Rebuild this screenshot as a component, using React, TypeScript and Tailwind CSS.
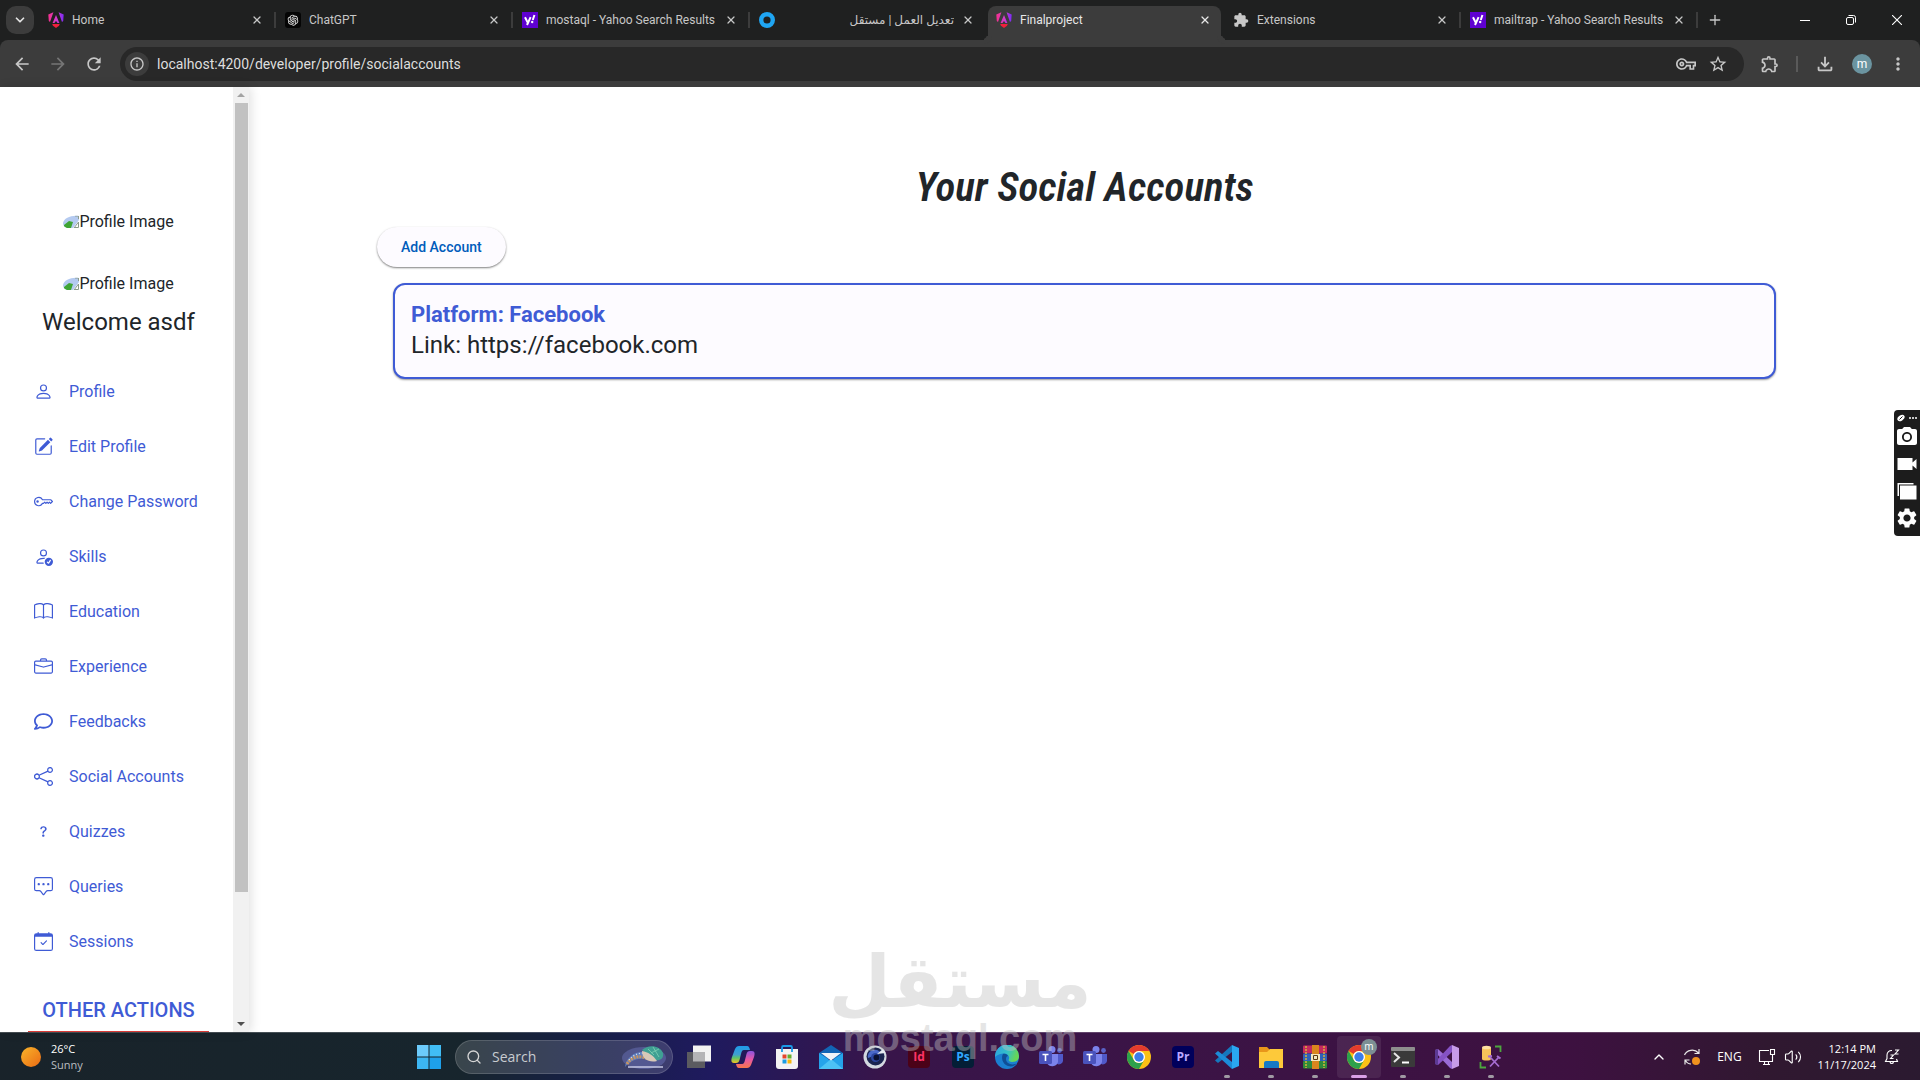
import type { ReactNode } from "react";
import { AiOutlineOpenAI } from "react-icons/ai";
import {
  BsBook,
  BsBriefcase,
  BsCalendarCheck,
  BsChatSquareDots,
  BsKey,
  BsPencilSquare,
  BsPerson,
  BsPersonCheck,
  BsQuestion,
  BsShare,
} from "react-icons/bs";
import { FaRegComment } from "react-icons/fa";
import {
  MdArrowBack,
  MdArrowForward,
  MdExtension,
  MdInfoOutline,
  MdMoreVert,
  MdOutlineExtension,
  MdOutlineFileDownload,
  MdOutlineVpnKey,
  MdPhotoCamera,
  MdRefresh,
  MdSettings,
  MdStarOutline,
  MdVideocam,
} from "react-icons/md";
import { ChevronDown, ChevronUp, Plus, Search, Volume2, X } from "lucide-react";

/* ---------- favicons ---------- */

function AngularIcon() {
  return (
    <svg viewBox="0 0 16 16" className="size-4 shrink-0">
      <defs>
        <linearGradient id="ng" x1="0" y1="0" x2="1" y2="0">
          <stop offset="0" stopColor="#f5308c" />
          <stop offset="0.55" stopColor="#d03bd0" />
          <stop offset="1" stopColor="#7a2bf5" />
        </linearGradient>
      </defs>
      <path
        d="M0.3 2.4L5.4 0.2L2 10L0.8 9ZM15.7 2.4L10.6 0.2L14 10L15.2 9ZM8 3L4.6 11H6.6L7.2 9.4H8.8L9.4 11H11.4Z"
        fill="url(#ng)"
      />
      <path d="M4.2 12h7.6L11 13.8L8 16L5 13.8Z" fill="#f0203c" />
    </svg>
  );
}

function ChatGptIcon() {
  return (
    <span className="flex size-4 shrink-0 items-center justify-center rounded-[3px] bg-[#050505] text-[#e6e6e6]">
      <AiOutlineOpenAI className="size-3.5" />
    </span>
  );
}

function YahooIcon() {
  return (
    <svg viewBox="0 0 16 16" className="size-4 shrink-0">
      <rect width="16" height="16" fill="#5f01d1" />
      <path d="M3 5.2L5.6 10.4M8.6 5.2L5 13" stroke="#fff" strokeWidth="2" />
      <path d="M12.4 3L10.8 8" stroke="#fff" strokeWidth="2" />
      <circle cx="10.2" cy="10" r="1.2" fill="#fff" />
    </svg>
  );
}

function RingIcon() {
  return (
    <svg viewBox="0 0 16 16" className="size-4 shrink-0">
      <circle cx="8" cy="8" r="5.8" fill="none" stroke="#1fa5f2" strokeWidth="4.4" />
    </svg>
  );
}

/* ---------- browser ---------- */

type Tab = { title: string; icon: ReactNode; active?: boolean; rtl?: boolean; line?: boolean };

const tabs: Tab[] = [
  { title: "Home", icon: <AngularIcon />, line: true },
  { title: "ChatGPT", icon: <ChatGptIcon />, line: true },
  { title: "mostaql - Yahoo Search Results", icon: <YahooIcon />, line: true },
  { title: "تعديل العمل | مستقل", icon: <RingIcon />, rtl: true },
  { title: "Finalproject", icon: <AngularIcon />, active: true },
  { title: "Extensions", icon: <MdExtension className="size-4 shrink-0 text-[#c7c7c7]" />, line: true },
  { title: "mailtrap - Yahoo Search Results", icon: <YahooIcon />, line: true },
];

function BrowserTab({ tab }: { tab: Tab }) {
  return (
    <div className="flex min-w-0 max-w-[237px] flex-1 items-center">
      <div
        className={
          tab.active
            ? "relative flex h-[34px] min-w-0 flex-1 items-center gap-2 self-end rounded-t-lg bg-[#3c3c3c] pr-2.5 pb-1.5 pl-2 text-[#e8e8e8] before:absolute before:bottom-0 before:-left-2 before:size-2 before:rounded-br-lg before:shadow-[4px_4px_0_0_#3c3c3c] after:absolute after:-right-2 after:bottom-0 after:size-2 after:rounded-bl-lg after:shadow-[-4px_4px_0_0_#3c3c3c]"
            : "flex min-w-0 flex-1 items-center gap-2 pr-2.5 pl-2 text-[#c7c7c7]"
        }
      >
        {tab.icon}
        <span dir={tab.rtl ? "rtl" : "ltr"} className="flex-1 overflow-hidden text-xs whitespace-nowrap">
          {tab.title}
        </span>
        <button type="button" aria-label={`Close ${tab.title}`} className="flex w-3 items-center justify-center">
          <X className="size-3" strokeWidth={2.5} />
        </button>
      </div>
      <span className={tab.line ? "mx-px h-4 w-0.5 bg-[#3c3c3c]" : "mx-px h-4 w-0.5"} />
    </div>
  );
}

function TabStrip() {
  return (
    <div className="flex h-10 items-stretch bg-[#1f2020]">
      <div className="flex flex-1 items-stretch">
        <button
          type="button"
          aria-label="Search tabs"
          className="mx-1.5 flex size-7 items-center justify-center self-center rounded-[10px] bg-[#3c3c3c] text-[#e3e3e3]"
        >
          <ChevronDown className="size-3.5" strokeWidth={3} />
        </button>
        {tabs.map((tab) => (
          <BrowserTab key={tab.title} tab={tab} />
        ))}
        <button type="button" aria-label="New tab" className="ml-2 text-[#c7c7c7]">
          <Plus className="size-4" />
        </button>
      </div>
      <div className="flex text-white">
        <button type="button" aria-label="Minimize" className="flex w-[46px] items-center justify-center">
          <svg viewBox="0 0 10 10" className="size-2.5">
            <path d="M0 5.5H10" stroke="currentColor" />
          </svg>
        </button>
        <button type="button" aria-label="Restore" className="flex w-[46px] items-center justify-center">
          <svg viewBox="0 0 10 10" className="size-2.5" fill="none" stroke="currentColor">
            <rect x="0.5" y="2.5" width="7" height="7" rx="1.5" />
            <path d="M2.5 0.5H7.5A2 2 0 0 1 9.5 2.5V7.5" />
          </svg>
        </button>
        <button type="button" aria-label="Close window" className="flex w-[46px] items-center justify-center">
          <svg viewBox="0 0 10 10" className="size-2.5">
            <path d="M0 0L10 10M10 0L0 10" stroke="currentColor" strokeWidth="1.1" />
          </svg>
        </button>
      </div>
    </div>
  );
}

function Toolbar() {
  return (
    <div className="bg-[#1f2020]">
      <div className="flex h-[47px] items-center rounded-t-lg bg-[#3c3c3c] pr-3 text-[#c7c7c7]">
        <div className="flex shrink-0 items-center gap-4 pr-4 pl-3">
          <button type="button" aria-label="Back">
            <MdArrowBack className="size-5" />
          </button>
          <button type="button" aria-label="Forward" className="text-[#757575]">
            <MdArrowForward className="size-5" />
          </button>
          <button type="button" aria-label="Reload">
            <MdRefresh className="size-5" />
          </button>
        </div>
        <div className="flex h-[34px] flex-1 items-center gap-3 rounded-full bg-[#282828] pr-4 pl-[5px]">
          <button
            type="button"
            aria-label="View site information"
            className="flex size-6 items-center justify-center rounded-full bg-[#3c3c3c]"
          >
            <MdInfoOutline className="size-4" />
          </button>
          <input
            aria-label="Address"
            defaultValue="localhost:4200/developer/profile/socialaccounts"
            className="-ml-1 flex-1 bg-transparent text-sm text-[#dedede] outline-none"
          />
          <button type="button" aria-label="Saved passwords">
            <MdOutlineVpnKey className="size-5" />
          </button>
          <button type="button" aria-label="Bookmark">
            <MdStarOutline className="size-5" />
          </button>
        </div>
        <div className="flex shrink-0 items-center gap-4 pl-4">
          <button type="button" aria-label="Extensions">
            <MdOutlineExtension className="size-5" />
          </button>
          <span className="h-4 w-0.5 bg-[#5a5a5a]" />
          <button type="button" aria-label="Downloads">
            <MdOutlineFileDownload className="size-[22px]" />
          </button>
          <button
            type="button"
            className="flex size-5 items-center justify-center rounded-full bg-[#6b94a0] text-xs text-white"
          >
            m
          </button>
          <button type="button" aria-label="Menu">
            <MdMoreVert className="size-5" />
          </button>
        </div>
      </div>
    </div>
  );
}

/* ---------- sidebar ---------- */

const links = [
  { label: "Profile", Icon: BsPerson },
  { label: "Edit Profile", Icon: BsPencilSquare },
  { label: "Change Password", Icon: BsKey },
  { label: "Skills", Icon: BsPersonCheck },
  { label: "Education", Icon: BsBook },
  { label: "Experience", Icon: BsBriefcase },
  { label: "Feedbacks", Icon: FaRegComment },
  { label: "Social Accounts", Icon: BsShare },
  { label: "Quizzes", Icon: BsQuestion },
  { label: "Queries", Icon: BsChatSquareDots },
  { label: "Sessions", Icon: BsCalendarCheck },
];

function BrokenImage() {
  return (
    <div className="flex h-6 items-center justify-center text-base text-[#212529]">
      <svg viewBox="0 0 16 16" className="size-4">
        <clipPath id="oval">
          <path d="M0 9C1 4 8 1 16 2V14H4C1 13 0 11 0 9Z" />
        </clipPath>
        <g clipPath="url(#oval)">
          <rect width="16" height="16" fill="#b4caf0" />
          <path d="M1 14V11L6 7L10 8L8 14Z" fill="#3fa535" />
          <path d="M10 14L16 6V14Z" fill="#fff" />
          <path d="M11 14L15.5 8V13.5H11" fill="none" stroke="#8a9a8a" />
          <path d="M12 2H15.5V5" fill="none" stroke="#8a9a8a" />
        </g>
      </svg>
      Profile Image
    </div>
  );
}

function Sidebar() {
  return (
    <aside className="z-10 flex w-[249px] shrink-0 overflow-hidden bg-white shadow-[2px_0_10px_rgba(0,0,0,0.12)]">
      <div className="flex-1 pt-[123px] pr-6 pl-7">
        <BrokenImage />
        <div className="h-[38px]" />
        <BrokenImage />
        <h2 className="mt-2.5 text-center text-2xl text-[#212529]">Welcome asdf</h2>
        <nav className="mt-[26px]">
          {links.map(({ label, Icon }) => (
            <a
              key={label}
              href="#"
              className="flex h-[55px] items-center gap-4 pl-1.5 text-base whitespace-nowrap text-[#3f5bd5]"
            >
              <Icon className="size-[19px] shrink-0" />
              {label}
            </a>
          ))}
        </nav>
        <h3 className="mt-[27px] border-b-2 border-[#d93a35] pb-[7px] text-center text-xl font-medium whitespace-nowrap text-[#3f5bd5]">
          OTHER ACTIONS
        </h3>
      </div>
      <div className="flex w-4 flex-col items-center bg-[#f1f1f1]">
        <svg viewBox="0 0 8 4" className="my-1.5 h-1 w-2">
          <path d="M0 4L4 0L8 4Z" fill="#a3a3a3" />
        </svg>
        <div className="w-[13px] grow-[789] bg-[#c1c1c1]" />
        <div className="grow-[124]" />
        <svg viewBox="0 0 8 4" className="my-1.5 h-1 w-2">
          <path d="M0 0L4 4L8 0Z" fill="#505050" />
        </svg>
      </div>
    </aside>
  );
}

/* ---------- page ---------- */

function SocialAccounts() {
  return (
    <main className="min-w-0 flex-1 bg-white px-32 pt-[76px]">
      <h1 className="text-center font-['Roboto_Condensed','Roboto',sans-serif] text-[41px] leading-[48px] font-semibold text-[#212529] italic">
        Your Social Accounts
      </h1>
      <button
        type="button"
        className="mt-4 block h-10 rounded-full bg-[#fdfbff] px-6 text-sm font-medium text-[#005cbb] shadow-[0_1px_2px_rgba(0,0,0,0.5)]"
      >
        Add Account
      </button>
      <section className="mx-4 mt-4 rounded-xl border-2 border-[#3f5bd5] bg-[#fdfbff] px-4 pt-[15px] pb-[17px] shadow-[0_1px_2px_rgba(0,0,0,0.4)]">
        <h2 className="text-[22px] leading-[30px] font-bold text-[#3f5bd5]">Platform: Facebook</h2>
        <p className="text-2xl leading-[30px] text-[#212529]">Link: https://facebook.com</p>
      </section>
    </main>
  );
}

function CaptureWidget() {
  return (
    <div className="absolute top-[323px] right-0 z-20 flex w-[26px] flex-col items-center gap-[3px] rounded-l bg-[#1c1c1c] pt-1 pb-1.5 text-white">
      <svg viewBox="0 0 20 8" className="h-2 w-5">
        <ellipse cx="4" cy="4" rx="4" ry="2.6" transform="rotate(-35 4 4)" fill="#fff" />
        <path d="M2.5 5.5L5.5 2.5" stroke="#1c1c1c" />
        <path d="M12 4h2M15 4h2M18 4h2" stroke="#fff" strokeWidth="1.4" />
      </svg>
      <button type="button" aria-label="Screenshot">
        <MdPhotoCamera className="size-6" />
      </button>
      <button type="button" aria-label="Record">
        <svg viewBox="0 0 24 24" className="size-6">
          <path d="M2.500 6H17.500V10.500L21.500 7V17L17.500 13.500V18H2.500Z" fill="#fff" />
        </svg>
      </button>
      <button type="button" aria-label="Gallery">
        <svg viewBox="0 0 24 24" className="size-6">
          <path d="M2.500 4H18.500V5.500H4V17H2.500Z" fill="#fff" />
          <rect x="5" y="6.500" width="16.500" height="14" fill="#fff" />
        </svg>
      </button>
      <button type="button" aria-label="Settings">
        <MdSettings className="size-6" />
      </button>
    </div>
  );
}

/* ---------- taskbar ---------- */

function ChromeIcon() {
  return (
    <svg viewBox="0 0 24 24" className="size-6">
      <circle cx="12" cy="12" r="12" fill="#fbc116" />
      <path d="M12 0A12 12 0 0 1 22.4 6H12A6 6 0 0 0 6.8 9L1.6 6A12 12 0 0 1 12 0Z" fill="#e33b2e" />
      <path d="M1.6 6A12 12 0 0 0 12 24L17.2 15A6 6 0 0 1 6.8 15Z" fill="#2da14c" />
      <circle cx="12" cy="12" r="6" fill="#fff" />
      <circle cx="12" cy="12" r="4.7" fill="#3b7de8" />
    </svg>
  );
}

function AdobeIcon({ label, tone }: { label: string; tone: string }) {
  return (
    <span className={`flex size-[22px] items-center justify-center rounded text-xs font-bold ${tone}`}>{label}</span>
  );
}

function TeamsIcon() {
  return (
    <svg viewBox="0 0 24 24" className="size-6">
      <circle cx="13" cy="4.5" r="3.5" fill="#7b83eb" />
      <circle cx="20.5" cy="5.5" r="2.4" fill="#5a62c8" />
      <path d="M16 9H24V15A4 4 0 0 1 17 18Z" fill="#5059c9" />
      <path d="M8 9H19V17A6 6 0 0 1 8 18Z" fill="#7b83eb" />
      <rect y="6" width="13" height="13" rx="1.5" fill="#4a53bc" />
      <path d="M3.5 9.5H9.5M6.5 9.5V16" stroke="#fff" strokeWidth="1.6" />
    </svg>
  );
}

type TaskApp = { name: string; icon: ReactNode; running?: boolean; focused?: boolean };

const apps: TaskApp[] = [
  {
    name: "Task view",
    icon: (
      <svg viewBox="0 0 24 24" className="size-6">
        <rect x="6" y="0.5" width="18" height="16" fill="#f2f2f2" />
        <rect x="0" y="7" width="18" height="16" fill="#5b5b60" />
        <rect x="6" y="7" width="12" height="9.5" fill="#b4b4b6" />
      </svg>
    ),
  },
  {
    name: "Copilot",
    icon: (
      <svg viewBox="0 0 24 24" className="size-6">
        <defs>
          <linearGradient id="copA" x1="0" y1="0" x2="0" y2="1">
            <stop offset="0" stopColor="#1e9bea" />
            <stop offset="0.5" stopColor="#3f9fd0" />
            <stop offset="0.7" stopColor="#5cc36a" />
            <stop offset="1" stopColor="#f2c521" />
          </linearGradient>
          <linearGradient id="copB" x1="0" y1="0" x2="0" y2="1">
            <stop offset="0" stopColor="#8a55e0" />
            <stop offset="0.5" stopColor="#e757a5" />
            <stop offset="1" stopColor="#f7764a" />
          </linearGradient>
        </defs>
        <path
          d="M8 1H16C18 1 18.5 3 19 5H13C11 5 10.5 7 10 9L8.5 15C8 17 7 18 5 18H3C0 18 0 15 1 12L4 4C5 2 6 1 8 1Z"
          fill="url(#copA)"
        />
        <path
          d="M16 23H8C6 23 5.5 21 5 19H11C13 19 13.5 17 14 15L15.5 9C16 7 17 6 19 6H21C24 6 24 9 23 12L20 20C19 22 18 23 16 23Z"
          fill="url(#copB)"
        />
      </svg>
    ),
  },
  {
    name: "Store",
    icon: (
      <svg viewBox="0 0 24 24" className="size-6">
        <path d="M1 4H23V21A3 3 0 0 1 20 24H4A3 3 0 0 1 1 21Z" fill="#f3f3f3" />
        <path d="M7 7V2.5A1.5 1.5 0 0 1 8.500 1H15.5A1.5 1.5 0 0 1 17 2.5V7" fill="none" stroke="#1a9be8" strokeWidth="1.8" />
        <path d="M7.5 9.5h4v4h-4z" fill="#e5452c" />
        <path d="M12.5 9.5h4v4h-4z" fill="#67ae2e" />
        <path d="M7.5 14.5h4v4h-4z" fill="#1b9de2" />
        <path d="M12.5 14.5h4v4h-4z" fill="#f6b70c" />
      </svg>
    ),
  },
  {
    name: "Mail",
    icon: (
      <svg viewBox="0 0 24 24" className="size-6">
        <path d="M0 8L12 0L24 8V14H0Z" fill="#1265b5" />
        <path d="M0 8L12 16L24 8V24H0Z" fill="#25a3ea" />
        <path d="M0 24L12 14L24 24Z" fill="#4cc2f5" />
        <path d="M2 8H22L12 15.5Z" fill="#f0f4f8" />
      </svg>
    ),
  },
  {
    name: "Cinema 4D",
    icon: (
      <svg viewBox="0 0 24 24" className="size-6">
        <circle cx="12" cy="12" r="11.5" fill="#d3d8e0" />
        <circle cx="12.5" cy="11.5" r="9" fill="#1a2450" />
        <path d="M5 13A7 7 0 0 1 17 7L13 10Z" fill="#4a68c8" />
        <circle cx="12.5" cy="12.5" r="4.5" fill="#2b45a0" />
        <circle cx="13.5" cy="12.5" r="3" fill="#0b1030" />
        <path d="M14 9L20 4L22.500 8Z" fill="#e6eaf2" />
      </svg>
    ),
  },
  { name: "InDesign", icon: <AdobeIcon label="Id" tone="bg-[#4b0218] text-[#ff3366]" /> },
  { name: "Photoshop", icon: <AdobeIcon label="Ps" tone="bg-[#041e36] text-[#31a8ff]" /> },
  {
    name: "Edge",
    icon: (
      <svg viewBox="0 0 24 24" className="size-6">
        <defs>
          <linearGradient id="edge" x1="0" y1="0" x2="1" y2="0.3">
            <stop offset="0" stopColor="#2b9fe0" />
            <stop offset="0.6" stopColor="#35c1c8" />
            <stop offset="1" stopColor="#66d657" />
          </linearGradient>
        </defs>
        <circle cx="12" cy="12" r="12" fill="#1b7fd0" />
        <path
          d="M0 12A12 12 0 0 1 24 11C24 16 20 17 17 17C14 17 13 15.5 14 14C15 11 12 8 8 8.5C4 9 1 11 0 12Z"
          fill="url(#edge)"
        />
        <path d="M8 9C6 12 7 19 13 21C17 22 20 21 22 18C18 21 11 19 11 14C11 12 12 11 13 11C12 9 10 8.5 8 9Z" fill="#0f4f96" />
      </svg>
    ),
  },
  { name: "Teams", icon: <TeamsIcon /> },
  { name: "Teams classic", icon: <TeamsIcon /> },
  { name: "Chrome", icon: <ChromeIcon /> },
  { name: "Premiere", icon: <AdobeIcon label="Pr" tone="bg-[#00005b] text-[#b9a8ff]" /> },
  {
    name: "VS Code",
    running: true,
    icon: (
      <svg viewBox="0 0 24 24" className="size-6">
        <path d="M17 0L24 3V21L17 24Z" fill="#2aa7f0" />
        <path d="M17 0V7L3 18L0 15.5Z" fill="#1577bd" />
        <path d="M17 24V17L3 6L0 8.5Z" fill="#1c8cd8" />
      </svg>
    ),
  },
  {
    name: "Explorer",
    running: true,
    icon: (
      <svg viewBox="0 0 24 24" className="size-6">
        <path d="M0 2H8L11 5V8H0Z" fill="#e8961a" />
        <path d="M0 7H8L11 4H24V23H0Z" fill="#fdc93a" />
        <path d="M5 23V18A2 2 0 0 1 7 16H18A2 2 0 0 1 20 18V23Z" fill="#1779c4" />
      </svg>
    ),
  },
  {
    name: "WinRAR",
    running: true,
    icon: (
      <svg viewBox="0 0 24 24" className="size-6">
        <rect y="0.5" width="24" height="8" rx="1" fill="#c42a5e" />
        <rect y="8.5" width="24" height="7.5" rx="1" fill="#2f62b8" />
        <rect y="16" width="24" height="7.5" rx="1" fill="#2f8a3a" />
        <path d="M3 1V23M21 1V23" stroke="#d8b43a" strokeWidth="1.5" strokeDasharray="2 1" />
        <rect x="9" y="0" width="7" height="24" fill="#d9861e" />
        <rect x="8" y="9" width="9" height="7" fill="#f5e8c0" />
        <path d="M10.5 10.5H14.5V14.5H10.5Z" fill="none" stroke="#5a3a10" />
      </svg>
    ),
  },
  { name: "Chrome m", icon: <ChromeIcon />, running: true, focused: true },
  {
    name: "Terminal",
    running: true,
    icon: (
      <svg viewBox="0 0 24 24" className="size-6">
        <rect y="2" width="24" height="20" rx="1" fill="#3a3a3a" />
        <rect y="2" width="24" height="4" rx="1" fill="#8e8e8e" />
        <path d="M3 8L8 12.5L3 17" fill="none" stroke="#e6e6e6" strokeWidth="2" />
        <path d="M11 17.5H18" stroke="#fff" strokeWidth="2" />
      </svg>
    ),
  },
  {
    name: "Visual Studio",
    running: true,
    icon: (
      <svg viewBox="0 0 24 24" className="size-6">
        <path d="M17 0L24 3V21L17 24Z" fill="#c79be8" />
        <path d="M0 5L3 4L17 17V24L15 23L0 7Z" fill="#9a6bd6" />
        <path d="M0 19L3 20L17 7V0L15 1L0 17Z" fill="#8552c4" />
        <path d="M0 5L3 4V20L0 19Z" fill="#5c3a94" />
      </svg>
    ),
  },
  {
    name: "SQL Server",
    running: true,
    icon: (
      <svg viewBox="0 0 24 24" className="size-6">
        <path d="M3 3V14C3 16 12 16 12 14V3Z" fill="#f7c35a" />
        <ellipse cx="7.5" cy="2.5" rx="4.5" ry="1.8" fill="#fde0a0" />
        <path d="M16 1.5H21.5V7M1.5 17V22.5H7" fill="none" stroke="#4da63e" strokeWidth="1.8" />
        <path d="M11 12L20 21.5M20 12L11 21.5" stroke="#a56bd0" strokeWidth="1.8" />
        <path d="M9 11.5L13 11M18 11L21.5 13.5" stroke="#a56bd0" strokeWidth="2" />
      </svg>
    ),
  },
];

function TaskbarApp({ app }: { app: TaskApp }) {
  return (
    <button
      type="button"
      aria-label={app.name}
      className={
        app.focused
          ? "relative flex h-[42px] w-11 items-center justify-center rounded bg-white/8"
          : "relative flex h-[42px] w-11 items-center justify-center"
      }
    >
      {app.icon}
      {app.focused && (
        <span className="absolute top-[3px] right-1 flex size-4 items-center justify-center rounded-full bg-[#7c8f94] text-[10px] text-white">
          m
        </span>
      )}
      {app.running && (
        <span
          className={
            app.focused
              ? "absolute bottom-0 h-[3px] w-4 rounded-full bg-[#d9a0e6]"
              : "absolute bottom-0 h-[3px] w-1.5 rounded-full bg-[#a09aa3]"
          }
        />
      )}
    </button>
  );
}

function Turtle() {
  return (
    <svg viewBox="0 0 48 28" className="h-7 w-12">
      <ellipse cx="24" cy="15" rx="22" ry="11" fill="#6f78c0" opacity="0.45" />
      <path d="M5 24C6 15 14 9 22 9C28 9 30 13 28 17C20 14 12 16 5 24Z" fill="#5f7fc0" />
      <path d="M7 21C12 13 20 12 28 16" fill="none" stroke="#c9945e" strokeWidth="3" strokeDasharray="2 1" />
      <path d="M9 17C13 12 18 10 24 10" fill="none" stroke="#d5def0" strokeWidth="1.2" strokeDasharray="1 2" />
      <path d="M22 7C28 1 40 2 43 10C44 16 40 18 34 17C30 16 26 10 22 7Z" fill="#3fa093" />
      <path d="M28 6L34 12M33 4L39 14M39 6L31 10" stroke="#7fd0b4" strokeWidth="0.8" />
      <path d="M22 8C28 9 33 12 37 18C29 20 22 16 22 8Z" fill="#d8c9b8" />
      <path d="M8 24H43" stroke="#c6c8e6" strokeWidth="1.5" />
    </svg>
  );
}

function Taskbar() {
  return (
    <footer className="flex h-12 shrink-0 items-center justify-between border-t border-white/20 bg-[linear-gradient(90deg,#19232a_0%,#17252d_24%,#171f48_31%,#1f1a5e_37%,#38154a_46%,#3b1446_60%,#3d1140_82%,#301830_92%,#2b1a30_100%)] font-['Open_Sans','Noto_Sans',sans-serif] text-white">
      <div className="flex w-[408px] items-center gap-2.5 pl-[21px]">
        <svg viewBox="0 0 20 20" className="size-5">
          <defs>
            <linearGradient id="sun" x1="0" y1="0" x2="1" y2="1">
              <stop offset="0" stopColor="#f9b52a" />
              <stop offset="1" stopColor="#ea6a14" />
            </linearGradient>
          </defs>
          <circle cx="10" cy="10" r="10" fill="url(#sun)" />
        </svg>
        <div className="text-[11px] leading-4">
          <p>26°C</p>
          <p className="text-[#b9bdc0]">Sunny</p>
        </div>
      </div>
      <div className="flex items-center">
        <button type="button" aria-label="Start" className="flex w-11 justify-center">
          <svg viewBox="0 0 24 24" className="size-6">
            <path d="M0 0h11.5v11.5H0z" fill="#6ccbfb" />
            <path d="M12.5 0H24v11.5H12.5z" fill="#41bdf5" />
            <path d="M0 12.5h11.5V24H0z" fill="#3cb6f2" />
            <path d="M12.5 12.5H24V24H12.500z" fill="#1ea0ea" />
          </svg>
        </button>
        <label className="mx-1 flex h-[34px] w-[218px] items-center gap-2.5 rounded-full border border-white/15 bg-white/15 pr-1 pl-2.5">
          <Search className="size-4 shrink-0 text-[#d5d5d5]" />
          <input
            aria-label="Search"
            placeholder="Search"
            className="w-24 min-w-0 flex-1 bg-transparent text-sm outline-none placeholder:text-[#c8cbd0]"
          />
          <Turtle />
        </label>
        {apps.map((app) => (
          <TaskbarApp key={app.name} app={app} />
        ))}
      </div>
      <div className="flex w-[408px] items-center justify-end gap-2 pr-5">
        <ChevronUp className="mr-2 size-4" />
        <svg viewBox="0 0 18 18" className="mr-2 size-[18px]" fill="none" stroke="#e8e8e8" strokeWidth="1.2">
          <path d="M1.5 7A8 7 0 0 1 15.5 5M16 1V5.5H11.5M2 16.5V12H6.5M2.5 12.5C4 15 6 16 8 16" />
          <circle cx="13" cy="13" r="4" fill="#f0921e" stroke="none" />
        </svg>
        <span className="mr-2 text-xs">ENG</span>
        <svg viewBox="0 0 18 18" className="size-[18px]" fill="none" stroke="#fff" strokeWidth="1.1">
          <path d="M11 2.5H1.5V13.5H14.5V9M5 16.5H12M6.5 13.5V16M10.5 13.5V16" />
          <path d="M12.5 1.5H16.5V6.5H12.5ZM14.5 6.5V10.5" />
        </svg>
        <Volume2 className="size-[18px]" strokeWidth={1.5} />
        <div className="ml-2 text-right text-[11px] leading-4">
          <p>12:14 PM</p>
          <p>11/17/2024</p>
        </div>
        <svg viewBox="0 0 16 16" className="size-4" fill="none" stroke="#fff" strokeWidth="1.1">
          <path d="M8 1.5A4.5 4.5 0 0 0 3 6V9.5L1.5 12.5H13.5L12.5 10M6 13C6.5 15 9 15 9.5 13" />
          <path d="M11 1H14.5L11 5H14.5M6.5 6H9.5L6.5 9.5H9.5" />
        </svg>
      </div>
    </footer>
  );
}

function Watermark() {
  return (
    <div
      aria-hidden="true"
      className="pointer-events-none absolute bottom-6 left-1/2 z-30 flex -translate-x-1/2 flex-col items-center text-[#c3c3c3] opacity-42"
    >
      <span dir="rtl" className="font-['DejaVu_Sans',sans-serif] text-[72px] leading-[76px] font-bold">
        مستقل
      </span>
      <span className="font-['Liberation_Sans',sans-serif] text-[38px] leading-9 font-bold">mostaql.com</span>
    </div>
  );
}

export default function App() {
  return (
    <div className="relative flex h-screen flex-col overflow-hidden bg-white font-['Roboto',sans-serif]">
      <header className="shrink-0 font-['Roboto','DejaVu_Sans',sans-serif]">
        <TabStrip />
        <Toolbar />
      </header>
      <div className="relative flex min-h-0 flex-1">
        <Sidebar />
        <SocialAccounts />
        <CaptureWidget />
      </div>
      <Taskbar />
      <Watermark />
    </div>
  );
}
